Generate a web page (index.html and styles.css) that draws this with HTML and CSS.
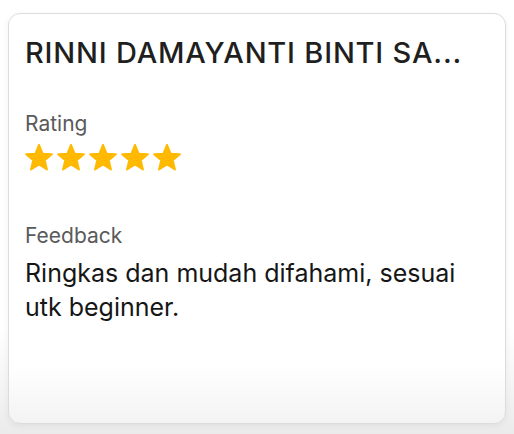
FILE: index.html
```html
<!DOCTYPE html>
<html>
<head>
<meta charset="utf-8">
<link rel="stylesheet" href="styles.css">
</head>
<body>
<div class="card">
  <h2 class="name">RINNI DAMAYANTI BINTI SA...</h2>
  <div class="section rating">
    <div class="label">Rating</div>
    <div class="stars">
      <svg class="star" viewBox="0 0 28 27"><polygon points="14,1 17.53,9.65 26.84,10.33 19.71,16.35 21.94,25.42 14,20.5 6.06,25.42 8.29,16.35 1.16,10.33 10.47,9.65"/></svg>
      <svg class="star" viewBox="0 0 28 27"><polygon points="14,1 17.53,9.65 26.84,10.33 19.71,16.35 21.94,25.42 14,20.5 6.06,25.42 8.29,16.35 1.16,10.33 10.47,9.65"/></svg>
      <svg class="star" viewBox="0 0 28 27"><polygon points="14,1 17.53,9.65 26.84,10.33 19.71,16.35 21.94,25.42 14,20.5 6.06,25.42 8.29,16.35 1.16,10.33 10.47,9.65"/></svg>
      <svg class="star" viewBox="0 0 28 27"><polygon points="14,1 17.53,9.65 26.84,10.33 19.71,16.35 21.94,25.42 14,20.5 6.06,25.42 8.29,16.35 1.16,10.33 10.47,9.65"/></svg>
      <svg class="star" viewBox="0 0 28 27"><polygon points="14,1 17.53,9.65 26.84,10.33 19.71,16.35 21.94,25.42 14,20.5 6.06,25.42 8.29,16.35 1.16,10.33 10.47,9.65"/></svg>
    </div>
  </div>
  <div class="section feedback">
    <div class="label">Feedback</div>
    <p class="text">Ringkas dan mudah difahami, sesuai utk beginner.</p>
  </div>
</div>
</body>
</html>
```
FILE: styles.css
```css
html, body {
  margin: 0;
  height: 100%;
}
body {
  padding: 13px 8px 0;
  box-sizing: border-box;
  font-family: Inter, "Liberation Sans", sans-serif;
  background: linear-gradient(to bottom, #ffffff 0, #ffffff 330px, #ebebeb 434px);
}
.card {
  box-sizing: border-box;
  height: 411px;
  border: 1px solid #dcdcdc;
  border-radius: 12px;
  padding: 22px 16px 16px;
  background: linear-gradient(to bottom, #ffffff 0, #ffffff 350px, #f3f3f3 411px);
  box-shadow: 0 2px 6px rgba(0, 0, 0, 0.06);
}
.name {
  margin: 0;
  font-size: 29px;
  line-height: 34px;
  font-weight: 500;
  letter-spacing: 0.8px;
  color: #1f1f1f;
  white-space: nowrap;
}
.section {
  display: flex;
  flex-direction: column;
}
.rating {
  margin-top: 41px;
}
.feedback {
  margin-top: 52px;
}
.label {
  font-size: 21px;
  line-height: 26px;
  color: #5a5a5a;
}
.stars {
  display: flex;
  gap: 4px;
  margin-top: 7px;
}
.star {
  width: 28px;
  height: 27px;
  fill: #ffb900;
  stroke: #ffb900;
  stroke-width: 2;
  stroke-linejoin: round;
}
.text {
  margin: 7px 0 0;
  font-size: 25px;
  line-height: 34px;
  color: #161616;
}
```
